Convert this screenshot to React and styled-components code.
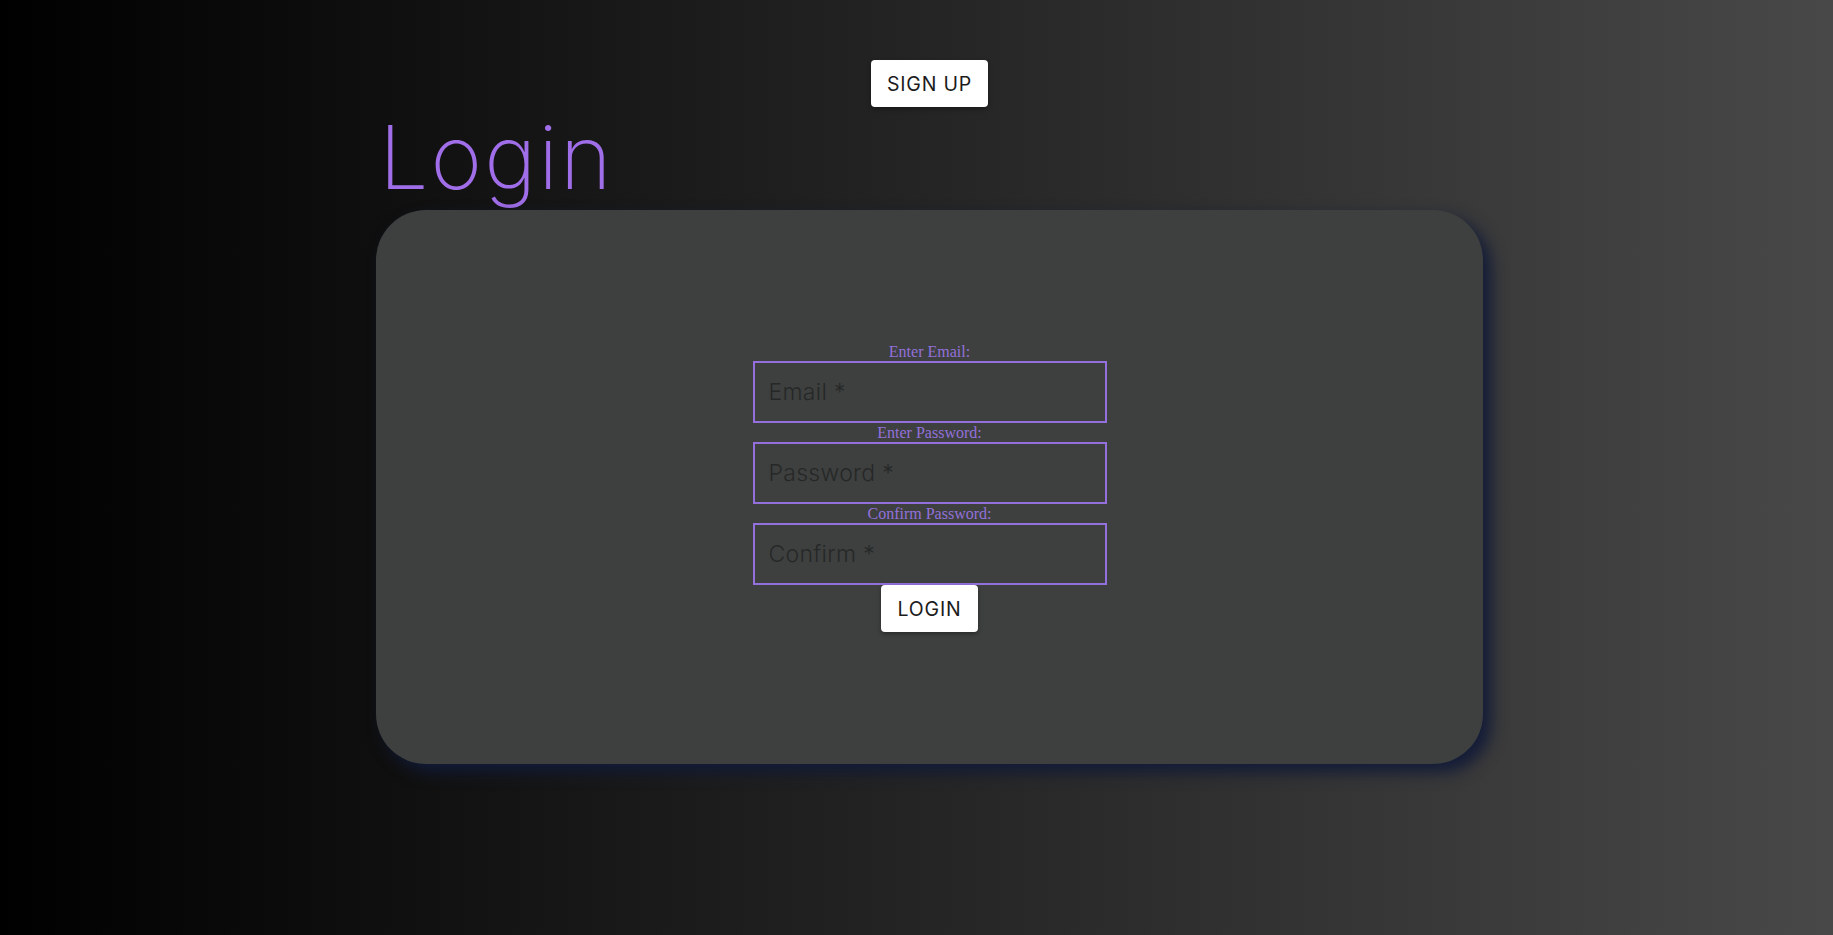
import React, { useState } from 'react'
import styled, { createGlobalStyle } from 'styled-components'

const GlobalStyle = createGlobalStyle`
  html, body {
    margin: 0;
    padding: 0;
  }
  body {
    min-height: 100vh;
    background: linear-gradient(to right, #000000, #484848);
  }
`

const Page = styled.div`
  min-height: 100vh;
  padding-left: 376px;
  padding-top: 60px;
  box-sizing: border-box;
`

const Column = styled.div`
  width: 1107px;
  display: flex;
  flex-direction: column;
`

const TopBar = styled.div`
  display: flex;
  padding-left: 495px;
`

const Button = styled.button`
  height: 47px;
  padding: 0 ${p => p.$pad || 16}px;
  background: #fff;
  color: #1c1c1c;
  border: none;
  border-radius: 4px;
  font-family: Inter, "Liberation Sans", sans-serif;
  font-size: 19.5px;
  font-weight: 400;
  letter-spacing: 0.8px;
  box-shadow: 0 2px 4px rgba(0, 0, 0, 0.35);
  cursor: pointer;
`

const Title = styled.h1`
  margin: 0 0 3px;
  padding-left: 3px;
  height: 100px;
  line-height: 100px;
  font-family: Inter, Lato, sans-serif;
  font-weight: 200;
  font-size: 88px;
  letter-spacing: 2px;
  color: #a06ee8;
`

const Card = styled.div`
  height: 554px;
  background: #3e403f;
  border-radius: 50px;
  box-shadow: 8px 8px 16px #121b38;
  display: flex;
  align-items: center;
  justify-content: center;
`

const Form = styled.form`
  width: 354px;
  display: flex;
  flex-direction: column;
  align-items: center;
`

const Label = styled.label`
  font-family: "Liberation Serif", serif;
  font-size: 16px;
  line-height: 19px;
  height: 19px;
  color: #9370db;
`

const Input = styled.input`
  width: 354px;
  height: 62px;
  box-sizing: border-box;
  padding: 0 14px;
  background: transparent;
  border: 2px solid #9370db;
  outline: none;
  font-family: Inter, "Open Sans", sans-serif;
  font-weight: 300;
  font-size: 23px;
  letter-spacing: 0.3px;
  color: #ddd;
  &::placeholder {
    color: #262828;
  }
`

const fields = [
  { id: 'email', label: 'Enter Email:', placeholder: 'Email *', type: 'email' },
  { id: 'password', label: 'Enter Password:', placeholder: 'Password *', type: 'password' },
  { id: 'confirm', label: 'Confirm Password:', placeholder: 'Confirm *', type: 'password' },
]

export default function App() {
  const [values, setValues] = useState({ email: '', password: '', confirm: '' })

  const onChange = e => setValues({ ...values, [e.target.name]: e.target.value })

  return (
    <>
      <GlobalStyle />
      <Page>
        <Column>
          <TopBar>
            <Button type="button">SIGN UP</Button>
          </TopBar>
          <Title>Login</Title>
          <Card>
            <Form onSubmit={e => e.preventDefault()}>
              {fields.map(f => (
                <React.Fragment key={f.id}>
                  <Label htmlFor={f.id}>{f.label}</Label>
                  <Input
                    id={f.id}
                    name={f.id}
                    type={f.type}
                    placeholder={f.placeholder}
                    value={values[f.id]}
                    onChange={onChange}
                  />
                </React.Fragment>
              ))}
              <Button type="submit" $pad={17}>LOGIN</Button>
            </Form>
          </Card>
        </Column>
      </Page>
    </>
  )
}
